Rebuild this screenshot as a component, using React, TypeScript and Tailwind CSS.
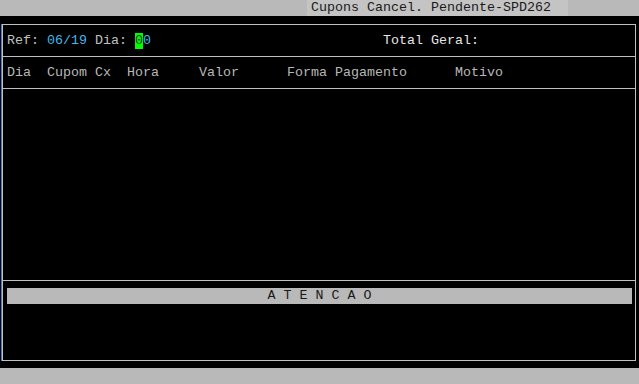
export default function App() {
  return (
    <div
      className="w-[639px] h-[384px] bg-black flex flex-col text-[13.33px] leading-4 overflow-hidden"
      style={{ fontFamily: '"Liberation Mono", "Courier New", monospace' }}
    >
      {/* top status bar */}
      <div className="h-4 bg-[#b9b9b9] flex shrink-0">
        <div className="ml-[307px] w-[261px] h-4 bg-[#c4c4c4] pl-1 text-[#1a1a1a] whitespace-pre">
          Cupons Cancel. Pendente-SPD262
        </div>
      </div>

      <div className="h-2 shrink-0" />

      {/* main frame */}
      <div className="ml-[1px] w-[635px] h-[337px] flex shrink-0 border-l border-[#3c7fc4]">
        <div className="flex-1 flex flex-col border border-[#c0c0c0]">
          <div className="h-[31px] flex items-center pl-[4px] whitespace-pre text-[#c0c0c0]">
            <span>Ref: </span>
            <span className="text-[#41b7ec]">06/19</span>
            <span> Dia: </span>
            <span className="bg-[#00ff00] text-[#0a4a0a]">0</span>
            <span className="text-[#41b7ec]">0</span>
            <span className="ml-[232px] text-[#e6e6e6]">Total Geral:</span>
          </div>
          <div className="h-px bg-[#c0c0c0]" />
          <div className="h-[31px] flex items-center pl-[4px] whitespace-pre text-[#b8b8b8]">
            Dia  Cupom Cx  Hora     Valor      Forma Pagamento      Motivo
          </div>
          <div className="h-px bg-[#c0c0c0]" />
          <div className="h-[191px]" />
          <div className="h-px bg-[#c0c0c0]" />
          <div className="mt-[7px] ml-[4px] mr-[3px] h-4 bg-[#b9b9b9] flex items-center justify-center text-[#1a1a1a] whitespace-pre">
            A T E N C A O
          </div>
        </div>
      </div>

      <div className="flex-1" />
      <div className="h-4 bg-[#b9b9b9] shrink-0" />
    </div>
  );
}
